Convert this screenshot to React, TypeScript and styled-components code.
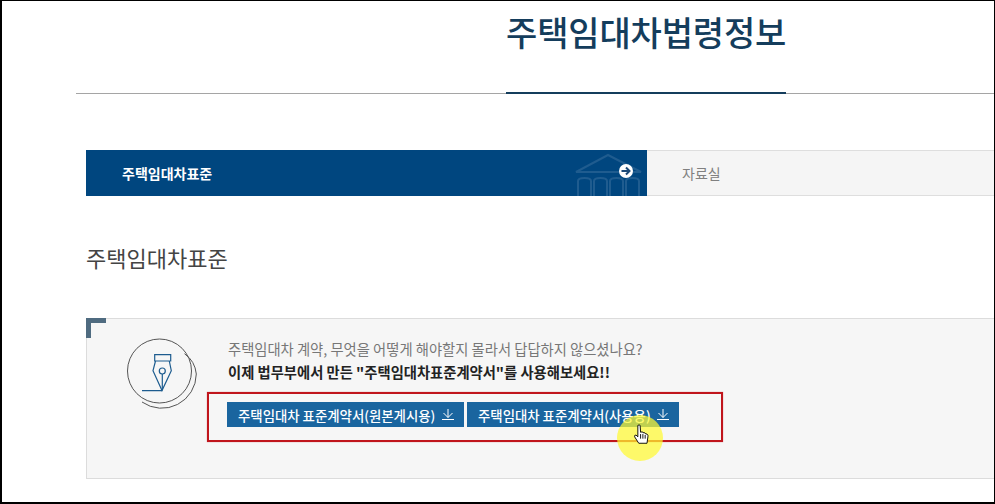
import styled, { createGlobalStyle } from 'styled-components';

const GlobalStyle = createGlobalStyle`
  html, body {
    margin: 0;
    padding: 0;
    background: #fff;
  }
  * {
    box-sizing: border-box;
  }
`;

const Frame = styled.div`
  width: 995px;
  height: 504px;
  overflow: hidden;
  background: #fff;
  border-style: solid;
  border-color: #000;
  border-width: 1px 1px 2px 2px;
  font-family: "Noto Sans CJK KR", "Noto Sans", sans-serif;
`;

const Header = styled.header`
  height: 93px;
  margin-left: 74px;
  padding-left: 430px;
  border-bottom: 1px solid #a5a5a5;
  display: flex;
`;

const PageTitle = styled.h1`
  margin: 0;
  width: 280px;
  height: 93px;
  margin-bottom: -1px;
  padding-top: 6px;
  border-bottom: 2px solid #143d5c;
  color: #143d5c;
  font-size: 34px;
  line-height: 50px;
  font-weight: 500;
  letter-spacing: -0.15px;
  white-space: nowrap;
`;

const Content = styled.main`
  margin-left: 84px;
  padding-top: 56px;
`;

const Tabs = styled.nav`
  height: 46px;
  display: flex;
`;

const ActiveTab = styled.div`
  position: relative;
  width: 561px;
  padding-left: 36px;
  background: #00467f;
  color: #fff;
  font-size: 14px;
  font-weight: 700;
  line-height: 46px;
  overflow: hidden;
`;

const TabWatermark = styled.svg`
  position: absolute;
  left: 486px;
  top: 3px;
`;

const TabArrow = styled.svg`
  position: absolute;
  left: 533px;
  top: 14px;
`;

const Tab = styled.div`
  flex: 1;
  padding-left: 35px;
  background: #f5f5f5;
  border-top: 1px solid #dedede;
  border-bottom: 1px solid #dedede;
  color: #808080;
  font-size: 14px;
  line-height: 44px;
`;

const SectionTitle = styled.h2`
  margin: 0;
  height: 122px;
  padding-top: 44px;
  color: #444;
  font-size: 22px;
  line-height: 34px;
  font-weight: 400;
`;

const GuideBox = styled.section`
  position: relative;
  height: 161px;
  display: flex;
  background: #f6f6f6;
  border-top: 1px solid #dcdcdc;
  border-bottom: 1px solid #dcdcdc;
  border-left: 1px solid #dcdcdc;
  &::before {
    content: '';
    position: absolute;
    left: -1px;
    top: -1px;
    width: 15px;
    height: 15px;
    border-top: 5px solid #4f6b80;
    border-left: 5px solid #4f6b80;
  }
`;

const PenBadge = styled.svg`
  flex: none;
  margin: 14px 0 0 35px;
`;

const GuideBody = styled.div`
  margin-left: 5px;
  padding-top: 19px;
`;

const GuideText = styled.p<{ $strong?: boolean }>`
  margin: ${(p) => (p.$strong ? '1px' : '0')} 0 0 0;
  height: 22px;
  padding-left: 21px;
  color: ${(p) => (p.$strong ? '#222' : '#777')};
  font-size: 14.3px;
  font-weight: ${(p) => (p.$strong ? 700 : 400)};
  line-height: 22px;
  white-space: nowrap;
`;

const Highlighted = styled.div`
  position: relative;
  width: 516px;
  height: 50px;
  margin-top: 9px;
  padding: 8px 0 0 18px;
  display: flex;
  gap: 3px;
  border: 2px solid #c0151c;
  box-shadow: 0 0 1px rgba(192, 21, 28, 0.5);
`;

const DownloadButton = styled.a<{ $width: number }>`
  width: ${(p) => p.$width}px;
  height: 25px;
  display: flex;
  align-items: center;
  justify-content: space-between;
  padding: 0 10px 0 11px;
  background: #1a659f;
  color: #fff;
  font-size: 13.4px;
  font-weight: 500;
  white-space: nowrap;
`;

const CursorHalo = styled.div`
  position: absolute;
  left: 408px;
  top: 21px;
  width: 46px;
  height: 46px;
  border-radius: 50%;
  background: rgba(255, 250, 50, 0.72);
`;

const HandCursor = styled.svg`
  position: absolute;
  left: 424px;
  top: 30px;
`;

const DownIcon = () => (
  <svg width="12" height="11" viewBox="0 0 12 11" fill="none" stroke="#fff" strokeWidth="1">
    <path d="M6 0V8.5M1.5 4L6 8.5L10.5 4M0 10.5H12" />
  </svg>
);

export default function App() {
  return (
    <>
      <GlobalStyle />
      <Frame>
        <Header>
          <PageTitle>주택임대차법령정보</PageTitle>
        </Header>
        <Content>
          <Tabs>
            <ActiveTab>
              주택임대차표준
              <TabWatermark width="72" height="44" viewBox="0 0 72 44" fill="none" stroke="#1f5c8f" strokeWidth="2">
                <path d="M4 19L36 2L69 19Z" />
                <path d="M6 44V28Q6 25 12.500 25Q19 25 19 28V44M22 44V28Q22 25 28.500 25Q35 25 35 28V44M38 44V28Q38 25 44.500 25Q51 25 51 28V44M54 44V28Q54 25 60.500 25Q67 25 67 28V44" />
              </TabWatermark>
              <TabArrow width="14" height="14" viewBox="0 0 14 14">
                <circle cx="7" cy="7" r="7" fill="#fff" />
                <path d="M2.500 7H10M7 3.500L10.500 7L7 10.500" fill="none" stroke="#1d4a78" strokeWidth="2" />
              </TabArrow>
            </ActiveTab>
            <Tab>자료실</Tab>
          </Tabs>
          <SectionTitle>주택임대차표준</SectionTitle>
          <GuideBox>
            <PenBadge width="80" height="80" viewBox="0 0 80 80" fill="none">
              <circle cx="37.500" cy="38" r="32" stroke="#555" strokeWidth="1" />
              <path d="M62.500 20.700A28 28 0 0 1 74.300 41A34.500 34.500 0 0 1 20 69" stroke="#555" strokeWidth="1" />
              <path d="M32.700 21.700H48.700V28H32.700Z" stroke="#1d5c8f" strokeWidth="1.200" />
              <path d="M33.500 28L31 37.700L40 57.500L49.300 37.700L47.300 28" stroke="#1d5c8f" strokeWidth="1.200" />
              <circle cx="40.300" cy="38" r="3" stroke="#1d5c8f" strokeWidth="1.200" />
              <path d="M40.300 41V57.500M20 57.700H40" stroke="#1d5c8f" strokeWidth="1.200" />
            </PenBadge>
            <GuideBody>
              <GuideText>주택임대차 계약, 무엇을 어떻게 해야할지 몰라서 답답하지 않으셨나요?</GuideText>
              <GuideText $strong>이제 법무부에서 만든 "주택임대차표준계약서"를 사용해보세요!!</GuideText>
              <Highlighted>
                <DownloadButton $width={237}>
                  주택임대차 표준계약서(원본게시용)
                  <DownIcon />
                </DownloadButton>
                <DownloadButton $width={212}>
                  주택임대차 표준계약서(사용용)
                  <DownIcon />
                </DownloadButton>
                <CursorHalo />
                <HandCursor width="17" height="22" viewBox="0 0 18 24">
                  <path d="M5 1.500Q6.500 0.500 7.500 1.500L8 9L10 8.500L10.500 9.500L12.500 9.500L13 10.500L15 11Q16.500 12 16 14L15 21H6L1.500 14Q1 12 3 12L5 14Z" fill="#fff" stroke="#000" strokeWidth="1" />
                  <path d="M8 11V16M10.500 11V16M13 12V16" stroke="#000" strokeWidth="1" />
                </HandCursor>
              </Highlighted>
            </GuideBody>
          </GuideBox>
        </Content>
      </Frame>
    </>
  );
}
